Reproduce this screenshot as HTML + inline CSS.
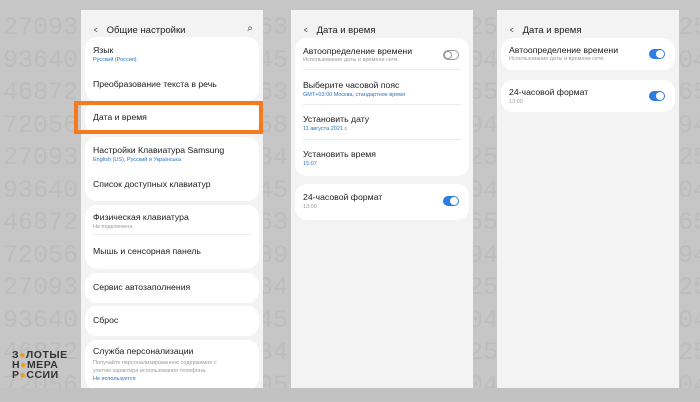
<!DOCTYPE html>
<html><head><meta charset="utf-8"><style>
*{margin:0;padding:0;box-sizing:border-box}
body{width:700px;height:401px;overflow:hidden;background:#c6c6c6;font-family:"Liberation Sans","DejaVu Sans",sans-serif;position:relative}
.dig{position:absolute;left:3px;top:12px;font-family:"Liberation Mono",monospace;font-size:25px;line-height:32.5px;color:#bdbdbd;white-space:pre}
.band{position:absolute;left:0;right:0;top:388px;bottom:0;background:#c2c2c2}
.p{position:absolute;top:10px;height:378px;width:182px;background:#f3f3f3;overflow:hidden}
.hd{position:absolute;top:15px;left:12px;font-size:9.5px;color:#222}
.hd b{font-weight:normal;display:inline-block;margin-right:8px;transform:scaleX(.7)}
.c{position:absolute;left:4px;right:4px;background:#fff;border-radius:12px}
.t{position:absolute;left:8px;font-size:8.7px;color:#1c1c1c;white-space:nowrap}
.s{position:absolute;left:8px;font-size:5.5px;color:#2a73c6;white-space:nowrap}
.g{color:#9a9a9a}
.ln{position:absolute;left:8px;right:8px;height:1px;background:#ececec}
.tg{position:absolute;right:10px;width:16px;height:10px;border-radius:5px;background:#2f7de0}
.tg:after{content:"";position:absolute;right:1px;top:1px;width:8px;height:8px;border-radius:50%;background:#fff}
.tg.off{background:#fff;border:1px solid #999}
.tg.off:after{left:0;top:0;right:auto;width:8px;height:8px;border:1px solid #999;box-sizing:border-box}
.logo{position:absolute;left:12px;top:350px;font-size:10.5px;line-height:10px;color:#333;font-weight:bold;letter-spacing:0.5px}
</style></head><body>
<div class="dig">27093            63            25            25
93640            45            04            04
46872            63            65            65
72056            58            94            94
27093            34            25            25
93640            45            04            04
46872            63            65            65
72056            89            94            94
27093            34            25            25
93640            45            04            04
46872            34            25            25
72056            95            04            04</div>
<div class="band"></div>
<div class="logo">З<span style="color:#e8a020">●</span>ЛОТЫЕ<br>Н<span style="color:#e8a020">●</span>МЕРА<br>Р<span style="color:#e8a020">●</span>ССИИ</div>

<div class="p" style="left:81px">
 <div class="hd"><b>&lt;</b>Общие настройки</div>
 <div style="position:absolute;right:10px;top:13px;font-size:10px;color:#333">⌕</div>
 <div class="c" style="top:27px;height:64px">
  <div class="t" style="top:8px">Язык</div><div class="s" style="top:20px">Русский (Россия)</div>
  <div class="t" style="top:42px">Преобразование текста в речь</div>
 </div>
 <div class="c" style="top:92px;height:32px"><div class="t" style="top:10px">Дата и время</div></div>
 <div class="c" style="top:127px;height:64px">
  <div class="t" style="top:8px">Настройки Клавиатура Samsung</div><div class="s" style="top:20px">English (US), Русский и Українська</div>
  <div class="t" style="top:42px">Список доступных клавиатур</div>
 </div>
 <div class="c" style="top:195px;height:64px">
  <div class="t" style="top:7px">Физическая клавиатура</div><div class="s g" style="top:19px">Не подключена</div>
  <div class="ln" style="top:29px"></div>
  <div class="t" style="top:41px">Мышь и сенсорная панель</div>
 </div>
 <div class="c" style="top:263px;height:30px"><div class="t" style="top:9px">Сервис автозаполнения</div></div>
 <div class="c" style="top:296px;height:30px"><div class="t" style="top:9px">Сброс</div></div>
 <div class="c" style="top:330px;height:50px">
  <div class="t" style="top:6px">Служба персонализации</div>
  <div class="s g" style="top:19px;line-height:8px">Получайте персонализированное содержимое с<br>учетом характера использования телефона.</div>
  <div class="s" style="top:36px">Не используется</div>
 </div>
</div>
<div style="position:absolute;left:74px;top:101px;width:189px;height:33px;border:4px solid #f47a1f"></div>

<div class="p" style="left:291px">
 <div class="hd"><b>&lt;</b>Дата и время</div>
 <div class="c" style="top:28px;height:138px">
  <div class="t" style="top:8px">Автоопределение времени</div><div class="s g" style="top:19px">Использование даты и времени сети.</div>
  <div class="tg off" style="top:12px"></div>
  <div class="ln" style="top:31px"></div>
  <div class="t" style="top:42px">Выберите часовой пояс</div><div class="s" style="top:54px">GMT+03:00 Москва, стандартное время</div>
  <div class="ln" style="top:66px"></div>
  <div class="t" style="top:76px">Установить дату</div><div class="s" style="top:88px">11 августа 2021 г.</div>
  <div class="ln" style="top:101px"></div>
  <div class="t" style="top:111px">Установить время</div><div class="s" style="top:123px">15:07</div>
 </div>
 <div class="c" style="top:174px;height:36px">
  <div class="t" style="top:8px">24-часовой формат</div><div class="s g" style="top:20px">13:00</div>
  <div class="tg" style="top:12px"></div>
 </div>
</div>

<div class="p" style="left:497px">
 <div class="hd"><b>&lt;</b>Дата и время</div>
 <div class="c" style="top:28px;height:32px">
  <div class="t" style="top:7px">Автоопределение времени</div><div class="s g" style="top:18px">Использование даты и времени сети.</div>
  <div class="tg" style="top:11px"></div>
 </div>
 <div class="c" style="top:70px;height:32px">
  <div class="t" style="top:7px">24-часовой формат</div><div class="s g" style="top:19px">13:00</div>
  <div class="tg" style="top:11px"></div>
 </div>
</div>
</body></html>
